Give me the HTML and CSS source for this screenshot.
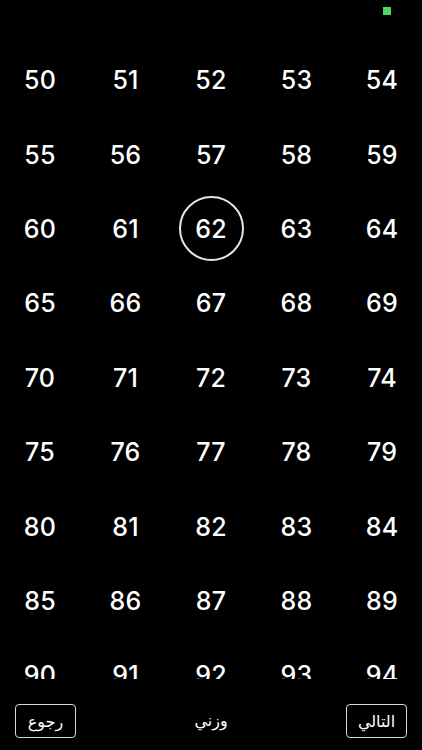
FILE: index.html
```html
<!DOCTYPE html>
<html lang="ar">
<head>
<meta charset="utf-8">
<title>وزني</title>
<link rel="stylesheet" href="styles.css">
</head>
<body>
<div class="app">
  <div class="status"><span class="dot"></span></div>
  <div class="scroll">
    <div class="grid" id="grid">
      <div class="cell">50</div><div class="cell">51</div><div class="cell">52</div><div class="cell">53</div><div class="cell">54</div>
      <div class="cell">55</div><div class="cell">56</div><div class="cell">57</div><div class="cell">58</div><div class="cell">59</div>
      <div class="cell">60</div><div class="cell">61</div><div class="cell selected"><span class="ring">62</span></div><div class="cell">63</div><div class="cell">64</div>
      <div class="cell">65</div><div class="cell">66</div><div class="cell">67</div><div class="cell">68</div><div class="cell">69</div>
      <div class="cell">70</div><div class="cell">71</div><div class="cell">72</div><div class="cell">73</div><div class="cell">74</div>
      <div class="cell">75</div><div class="cell">76</div><div class="cell">77</div><div class="cell">78</div><div class="cell">79</div>
      <div class="cell">80</div><div class="cell">81</div><div class="cell">82</div><div class="cell">83</div><div class="cell">84</div>
      <div class="cell">85</div><div class="cell">86</div><div class="cell">87</div><div class="cell">88</div><div class="cell">89</div>
      <div class="cell">90</div><div class="cell">91</div><div class="cell">92</div><div class="cell">93</div><div class="cell">94</div>
      <div class="cell">95</div><div class="cell">96</div><div class="cell">97</div><div class="cell">98</div><div class="cell">99</div>
    </div>
  </div>
  <div class="bottom">
    <button class="btn">رجوع</button>
    <div class="title">وزني</div>
    <button class="btn">التالي</button>
  </div>
</div>
</body>
</html>
```
FILE: styles.css
```css
html, body {
  margin: 0;
  padding: 0;
  background: #000;
}
body {
  font-family: "Inter", "Liberation Sans", sans-serif;
  color: #fff;
}
.app {
  width: 422px;
  height: 750px;
  display: flex;
  flex-direction: column;
  overflow: hidden;
}
.status {
  height: 43px;
  flex: none;
  display: flex;
  justify-content: flex-end;
  align-items: flex-start;
  padding: 7px 31px 0 0;
  box-sizing: border-box;
}
.dot {
  width: 8px;
  height: 8px;
  background: #4cd964;
}
.scroll {
  height: 636px;
  flex: none;
  overflow: hidden;
}
.grid {
  display: grid;
  grid-template-columns: repeat(5, 80px);
  column-gap: 5.5px;
  grid-auto-rows: 74.4px;
  direction: ltr;
}
.cell {
  display: flex;
  align-items: center;
  justify-content: center;
  font-size: 25px;
  font-weight: 500;
  letter-spacing: 0.2px;
}
.ring {
  width: 61px;
  height: 61px;
  border: 2px solid #e6e6e6;
  border-radius: 50%;
  display: flex;
  align-items: center;
  justify-content: center;
}
.bottom {
  flex: 1;
  display: flex;
  align-items: flex-start;
  justify-content: space-between;
  padding: 25px 15px 0 15px;
  direction: ltr;
}
.btn {
  width: 61px;
  height: 34px;
  background: transparent;
  border: 1.3px solid #d8d8d8;
  border-radius: 4px;
  color: #fff;
  font-family: "DejaVu Sans", "Noto Sans", sans-serif;
  font-size: 16px;
  padding: 0;
  display: flex;
  align-items: center;
  justify-content: center;
}
.title {
  font-family: "DejaVu Sans", "Noto Sans", sans-serif;
  font-size: 16px;
  line-height: 34px;
  color: #fff;
}
```
